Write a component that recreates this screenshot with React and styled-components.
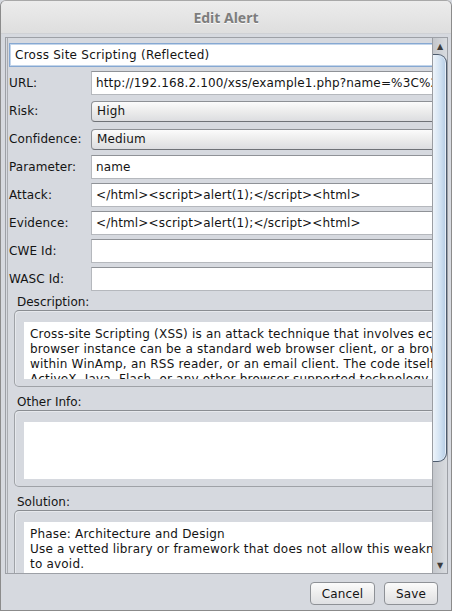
import React from 'react'
import styled, { createGlobalStyle } from 'styled-components'

const GlobalStyle = createGlobalStyle`
  html, body {
    margin: 0;
    padding: 0;
    background: #d6d9df;
  }
  * {
    box-sizing: border-box;
  }
`

const fields = [
  { label: 'URL:', value: 'http://192.168.2.100/xss/example1.php?name=%3C%2Fhtml%3E%3Cscript%3Ealert%281%29%3B%3C%2Fscript%3E%3Chtml%3E' },
  { label: 'Risk:', value: 'High', combo: true },
  { label: 'Confidence:', value: 'Medium', combo: true },
  { label: 'Parameter:', value: 'name' },
  { label: 'Attack:', value: '</html><script>alert(1);</script><html>' },
  { label: 'Evidence:', value: '</html><script>alert(1);</script><html>' },
  { label: 'CWE Id:', value: '' },
  { label: 'WASC Id:', value: '' },
]

const sections = [
  {
    label: 'Description:',
    lines: [
      'Cross-site Scripting (XSS) is an attack technique that involves echoing attacker-supplied code into a user\'s browser instance. A',
      'browser instance can be a standard web browser client, or a browser object embedded in a software product such as the browser',
      'within WinAmp, an RSS reader, or an email client. The code itself is usually written in HTML/JavaScript, but may also extend to VBScript,',
      'ActiveX, Java, Flash, or any other browser-supported technology.',
    ],
  },
  { label: 'Other Info:', lines: [] },
  {
    label: 'Solution:',
    lines: [
      'Phase: Architecture and Design',
      'Use a vetted library or framework that does not allow this weakness to occur or provides constructs that make this weakness easier',
      'to avoid.',
      'Examples of libraries and frameworks that make it easier to generate properly encoded output include Microsoft\'s Anti-XSS library,',
    ],
  },
]

const EditAlert = () => {
  return (
    <Window>
      <TitleBar>Edit Alert</TitleBar>
      <Body>
        <ScrollPane>
          <Viewport>
            <Content>
              <NameField>Cross Site Scripting (Reflected)</NameField>
              {fields.map((f) => (
                <Row key={f.label}>
                  <Label>{f.label}</Label>
                  {f.combo ? <Combo>{f.value}</Combo> : <TextField>{f.value}</TextField>}
                </Row>
              ))}
              {sections.map((s) => (
                <Section key={s.label}>
                  <SectionLabel>{s.label}</SectionLabel>
                  <Box>
                    <TextArea>
                      {s.lines.map((l, i) => (
                        <Line key={i}>{l}</Line>
                      ))}
                    </TextArea>
                  </Box>
                </Section>
              ))}
            </Content>
          </Viewport>
          <ScrollBar>
            <Arrow>▲</Arrow>
            <Thumb />
            <Track />
            <Arrow>▼</Arrow>
          </ScrollBar>
        </ScrollPane>
        <Footer>
          <Button $w={65}>Cancel</Button>
          <Button $w={54}>Save</Button>
        </Footer>
      </Body>
    </Window>
  )
}

const Window = styled.div`
  width: 452px;
  height: 611px;
  display: flex;
  flex-direction: column;
  border: 1px solid #8b8b8b;
  border-top-color: #a8a8a8;
  border-radius: 6px 6px 0 0;
  background: #d6d9df;
  font-family: 'DejaVu Sans', sans-serif;
  font-size: 12px;
  color: #141414;
  overflow: hidden;
`

const TitleBar = styled.div`
  height: 33px;
  flex-shrink: 0;
  display: flex;
  align-items: center;
  justify-content: center;
  background: linear-gradient(#ececec, #dedede);
  border-bottom: 1px solid #cfd1d5;
  font-family: 'Noto Sans', sans-serif;
  font-weight: 700;
  font-size: 14px;
  color: #7d7d7d;
  text-shadow: 0 1px 0 #fafafa;
`

const Body = styled.div`
  flex: 1;
  display: flex;
  flex-direction: column;
  padding: 3px 3px 0 4px;
`

const ScrollPane = styled.div`
  height: 537px;
  display: flex;
  border: 1px solid #9da0a6;
  padding-left: 1px;
  background: #d6d9df;
`

const Viewport = styled.div`
  flex: 1;
  overflow: hidden;
  border-left: 1px solid #a9acb1;
`

const Content = styled.div`
  width: 470px;
  padding: 5px 0 0 1px;
  display: flex;
  flex-direction: column;
  gap: 4px;
`

const NameField = styled.div`
  height: 24px;
  display: flex;
  align-items: center;
  padding-left: 5px;
  background: #fff;
  border: 1px solid #86a8d2;
  box-shadow: inset 0 0 0 1px #c3d5ea;
  letter-spacing: 0.25px;
  font-size: 12px;
`

const Row = styled.div`
  height: 24px;
  display: grid;
  grid-template-columns: 82px 1fr;
  align-items: center;
`

const Label = styled.span`
  white-space: nowrap;
  letter-spacing: 0.1px;
`

const TextField = styled.div`
  height: 24px;
  display: flex;
  align-items: center;
  padding-left: 4px;
  background: #fff;
  border: 1px solid #b5b8bd;
  border-top-color: #8f9297;
  white-space: nowrap;
  overflow: hidden;
  letter-spacing: 0.15px;
`

const Combo = styled.div`
  height: 21px;
  display: flex;
  align-items: center;
  padding-left: 5px;
  border: 1px solid #8d9095;
  border-bottom-color: #6f7277;
  border-radius: 4px;
  background: linear-gradient(#fbfbfb, #ececec 50%, #dcdde0);
  letter-spacing: 0.15px;
`

const Section = styled.div`
  display: flex;
  flex-direction: column;
  padding-left: 5px;
`

const SectionLabel = styled.div`
  height: 15px;
  line-height: 15px;
  padding-left: 3px;
`

const Box = styled.div`
  height: 77px;
  padding: 11px 0 7px 9px;
  border: 1px solid #9fa2a7;
  border-top-color: #8a8d92;
  border-radius: 5px;
  box-shadow: inset 1px 1px 0 #e6e8ec;
  margin-bottom: 4px;
`

const TextArea = styled.div`
  height: 100%;
  background: #fff;
  padding: 5px 0 0 6px;
  overflow: hidden;
`

const Line = styled.div`
  height: 15px;
  line-height: 15px;
  white-space: pre;
  letter-spacing: 0.2px;
`

const ScrollBar = styled.div`
  width: 15px;
  display: flex;
  flex-direction: column;
  border-left: 1px solid #9a9da2;
  background: linear-gradient(90deg, #c4c7cc, #d9dce0);
`

const Arrow = styled.div`
  height: 16px;
  display: flex;
  align-items: center;
  justify-content: center;
  font-size: 8px;
  color: #3c3c3c;
`

const Thumb = styled.div`
  height: 408px;
  border: 1px solid #4d5b6d;
  border-left: none;
  border-radius: 0 9px 9px 0;
  background: linear-gradient(90deg, #eef4fa, #d2e2f2 55%, #b3cbe4);
  box-shadow: inset -1px 0 0 #e6eef8;
`

const Track = styled.div`
  flex: 1;
`

const Footer = styled.div`
  flex: 1;
  display: flex;
  justify-content: flex-end;
  align-items: flex-start;
  gap: 9px;
  padding: 8px 10px 0 0;
`

const Button = styled.button`
  width: ${(p) => p.$w}px;
  height: 23px;
  padding: 0;
  border: 1px solid #8e9196;
  border-radius: 4px;
  background: linear-gradient(#fbfbfb, #ececec 55%, #dfe0e3);
  font-family: 'DejaVu Sans', sans-serif;
  font-size: 12px;
  color: #141414;
  letter-spacing: 0.1px;
`

const App = () => (
  <>
    <GlobalStyle />
    <EditAlert />
  </>
)

export default App
